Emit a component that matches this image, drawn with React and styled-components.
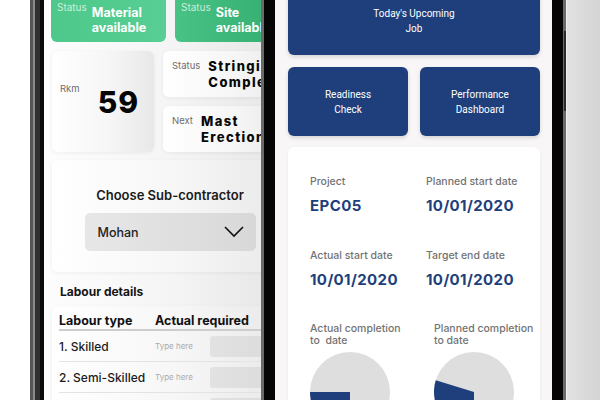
import React from 'react';
import styled, { createGlobalStyle } from 'styled-components';

const GlobalStyle = createGlobalStyle`
  html, body {
    margin: 0;
    height: 400px;
    overflow: hidden;
  }
  body {
    background: linear-gradient(90deg, #fff 0, #fff 566px, #e1e1e1 567px, #d4d4d4 600px);
    font-family: Inter, "Noto Sans", sans-serif;
  }
`;

const Stage = styled.div`
  display: flex;
  align-items: flex-start;
  padding-left: 30px;
  margin-top: -60px;
`;

/* ---------- devices ---------- */

const LeftDevice = styled.div`
  border: 3px solid #555;
  padding: 7px;
  background: #303030;
  box-shadow: inset 0 0 0 2px #8a8a8a;
  border-radius: 44px;
`;

const Bezel = styled.div`
  background: #0a0a0a;
  padding: 4px;
  border-radius: 36px;
`;

const RightDevice = styled.div`
  position: relative;
  z-index: 1;
  margin-left: -49px;
  border: 3px solid #6a6a6a;
  padding: 11px;
  background: #050505;
  border-radius: 44px;
`;

const SideKey = styled.span`
  position: absolute;
  right: -3px;
  top: 88px;
  width: 2px;
  height: 80px;
  background: #2a2a2a;
`;

const LeftScreen = styled.div`
  width: 252px;
  height: 540px;
  box-sizing: border-box;
  padding: 33px 8px 0 7px;
  overflow: hidden;
  background: linear-gradient(90deg, #fdfdfd 0%, #f5f5f5 50%, #e4e4e4 100%);
`;

const RightScreen = styled.div`
  width: 277px;
  height: 530px;
  box-sizing: border-box;
  padding: 33px 12px 0 13px;
  overflow: hidden;
  background: #f8f6f7;
`;

/* ---------- left phone parts ---------- */

const TileRow = styled.div`
  display: grid;
  grid-template-columns: 115px 115px;
  gap: 9px;
`;

const Tile = styled.div`
  height: 55px;
  box-sizing: border-box;
  border-radius: 6px;
  display: flex;
  align-items: flex-end;
  gap: 5px;
  padding: 0 6px 7px;
  background: ${p =>
    p.$deep
      ? 'linear-gradient(90deg, #48c385, #33ab6e)'
      : 'linear-gradient(90deg, #4dc88a, #58ce94)'};
`;

const TileLabel = styled.span`
  align-self: flex-start;
  margin-top: 14px;
  font-size: 10px;
  line-height: 12px;
  color: rgba(255, 255, 255, 0.72);
`;

const TileTitle = styled.span`
  font-size: 12.5px;
  line-height: 15px;
  font-weight: 700;
  color: #fff;
  white-space: nowrap;
`;

const Card = styled.div`
  border-radius: 6px;
  background: linear-gradient(90deg, #fff 0%, #f6f6f6 55%, #e8e8e8 100%);
  box-shadow: 0 1px 4px rgba(0, 0, 0, 0.06);
`;

const MetricRow = styled.div`
  display: grid;
  grid-template-columns: 102px 1fr;
  gap: 9px;
  margin-top: 9px;
  padding-left: 1px;
`;

const RkmCard = styled(Card)`
  height: 101px;
  display: flex;
  align-items: center;
  gap: 18px;
  padding-left: 8px;
`;

const SmallLabel = styled.span`
  font-size: 9.5px;
  line-height: 12px;
  color: #6d6d6d;
`;

const RkmLabel = styled(SmallLabel)`
  margin-bottom: 26px;
`;

const BigNumber = styled.span`
  font-size: 30px;
  line-height: 32px;
  font-weight: 800;
  letter-spacing: 1px;
  color: #050505;
`;

const StepStack = styled.div`
  display: flex;
  flex-direction: column;
  gap: 9px;
`;

const StepCard = styled(Card)`
  height: 46px;
  display: flex;
  align-items: center;
  padding: 0 9px;
`;

const StepBody = styled.div`
  display: flex;
  align-items: flex-start;
  gap: 8px;
`;

const StepLabel = styled(SmallLabel)`
  padding-top: 2px;
`;

const StepTitle = styled.span`
  font-size: 13px;
  line-height: 16px;
  font-weight: 800;
  letter-spacing: 1.4px;
  color: #080808;
  white-space: nowrap;
`;

const ChooseCard = styled(Card)`
  margin: 8px 0 0 1px;
  width: 236px;
  box-sizing: border-box;
  padding: 27px 0 21px;
  display: flex;
  flex-direction: column;
  align-items: center;
`;

const ChooseTitle = styled.div`
  font-size: 13px;
  line-height: 16px;
  font-weight: 600;
  color: #1a1a1a;
`;

const Select = styled.div`
  margin-top: 10px;
  width: 171px;
  height: 38px;
  box-sizing: border-box;
  border-radius: 5px;
  padding: 0 12px 0 13px;
  display: flex;
  align-items: center;
  justify-content: space-between;
  background: linear-gradient(90deg, #e7e7e7, #d8d8d8);
  font-size: 12.5px;
  font-weight: 500;
  color: #222;
`;

const SectionHeading = styled.div`
  margin: 13px 0 7px;
  padding-left: 9px;
  font-size: 12px;
  line-height: 14px;
  font-weight: 700;
  color: #151515;
`;

const TableCard = styled(Card)`
  margin-left: 1px;
  width: 236px;
  padding-left: 7px;
  box-sizing: border-box;
`;

const HeadRow = styled.div`
  display: grid;
  grid-template-columns: 96px 1fr;
  align-items: end;
  height: 25px;
  box-sizing: border-box;
  border-bottom: 2px solid #cdcdcd;
  font-size: 12.5px;
  line-height: 16px;
  font-weight: 700;
  color: #111;
  white-space: nowrap;
`;

const BodyRow = styled.div`
  display: grid;
  grid-template-columns: 96px 55px 1fr;
  align-items: center;
  height: 31px;
  box-sizing: border-box;
  border-bottom: 1px solid #e3e3e3;
`;

const RowLabel = styled.span`
  font-size: 12px;
  font-weight: 500;
  color: #1b1b1b;
  white-space: nowrap;
`;

const Placeholder = styled.span`
  font-size: 8px;
  color: #ababab;
`;

const InputBox = styled.div`
  height: 21px;
  border-radius: 3px;
  background: linear-gradient(90deg, #e2e2e2, #d9d9d9);
`;

/* ---------- right phone parts ---------- */

const ActionButton = styled.div`
  height: ${p => p.$h}px;
  border-radius: 6px;
  background: #1e3f7b;
  box-shadow: 0 2px 4px rgba(0, 0, 0, 0.14);
  display: flex;
  align-items: center;
  justify-content: center;
  text-align: center;
  font-family: Roboto, "Liberation Sans", sans-serif;
  font-size: 10px;
  line-height: 15px;
  color: #fff;
`;

const ButtonRow = styled.div`
  display: grid;
  grid-template-columns: 1fr 1fr;
  gap: 12px;
  margin-top: 12px;
`;

const InfoCard = styled.div`
  margin-top: 11px;
  border-radius: 6px;
  background: #fff;
  box-shadow: 0 1px 4px rgba(0, 0, 0, 0.05);
  padding: 29px 22px 40px;
`;

const FieldGrid = styled.div`
  display: grid;
  grid-template-columns: ${p => p.$first}px 1fr;
  row-gap: 36px;
  margin-top: ${p => p.$top || 0}px;
`;

const FieldLabel = styled.div`
  font-size: 10.5px;
  line-height: 12px;
  font-weight: 500;
  color: #737373;
  white-space: nowrap;
`;

const FieldValue = styled.div`
  margin-top: 9px;
  font-size: 15px;
  line-height: 17px;
  font-weight: 700;
  letter-spacing: 0.4px;
  color: #1e3f7b;
`;

const PieBox = styled.svg`
  display: block;
  margin-top: 5px;
`;

const Chevron = () => (
  <svg width="20" height="12" viewBox="0 0 20 12">
    <polyline points="1,1 10,10 19,1" fill="none" stroke="#111" strokeWidth="1.6" />
  </svg>
);

const Pie = ({ wedge }) => (
  <PieBox width="80" height="80" viewBox="0 0 80 80">
    <circle cx="40" cy="40" r="40" fill="#dedede" />
    <path d={wedge} fill="#1e3f7b" />
  </PieBox>
);

const labourRows = ['1. Skilled', '2. Semi-Skilled', '3. Unskilled'];

const fields = [
  { label: 'Project', value: 'EPC05' },
  { label: 'Planned start date', value: '10/01/2020' },
  { label: 'Actual start date', value: '10/01/2020' },
  { label: 'Target end date', value: '10/01/2020' },
];

const App = () => (
  <>
    <GlobalStyle />
    <Stage>
      <LeftDevice>
        <Bezel>
          <LeftScreen>
            <TileRow>
              <Tile>
                <TileLabel>Status</TileLabel>
                <TileTitle>Material<br />available</TileTitle>
              </Tile>
              <Tile $deep>
                <TileLabel>Status</TileLabel>
                <TileTitle>Site<br />available</TileTitle>
              </Tile>
            </TileRow>

            <MetricRow>
              <RkmCard>
                <RkmLabel>Rkm</RkmLabel>
                <BigNumber>59</BigNumber>
              </RkmCard>
              <StepStack>
                <StepCard>
                  <StepBody>
                    <StepLabel>Status</StepLabel>
                    <StepTitle>Stringing<br />Complete</StepTitle>
                  </StepBody>
                </StepCard>
                <StepCard>
                  <StepBody>
                    <StepLabel>Next</StepLabel>
                    <StepTitle>Mast<br />Erection</StepTitle>
                  </StepBody>
                </StepCard>
              </StepStack>
            </MetricRow>

            <ChooseCard>
              <ChooseTitle>Choose Sub-contractor</ChooseTitle>
              <Select>
                <span>Mohan</span>
                <Chevron />
              </Select>
            </ChooseCard>

            <SectionHeading>Labour details</SectionHeading>
            <TableCard>
              <HeadRow>
                <span>Labour type</span>
                <span>Actual required</span>
              </HeadRow>
              {labourRows.map(row => (
                <BodyRow key={row}>
                  <RowLabel>{row}</RowLabel>
                  <Placeholder>Type here</Placeholder>
                  <InputBox />
                </BodyRow>
              ))}
            </TableCard>
          </LeftScreen>
        </Bezel>
      </LeftDevice>

      <RightDevice>
        <SideKey />
        <RightScreen>
          <ActionButton $h={68}>Today's Upcoming<br />Job</ActionButton>
          <ButtonRow>
            <ActionButton $h={69}>Readiness<br />Check</ActionButton>
            <ActionButton $h={69}>Performance<br />Dashboard</ActionButton>
          </ButtonRow>

          <InfoCard>
            <FieldGrid $first={116}>
              {fields.map(f => (
                <div key={f.label}>
                  <FieldLabel>{f.label}</FieldLabel>
                  <FieldValue>{f.value}</FieldValue>
                </div>
              ))}
            </FieldGrid>
            <FieldGrid $first={124} $top={35}>
              <div>
                <FieldLabel>Actual completion<br />{'to\u00a0 date'}</FieldLabel>
                <Pie wedge="M40,40 L0,40 A40,40 0 0,0 40,80 Z" />
              </div>
              <div>
                <FieldLabel>Planned completion<br />to date</FieldLabel>
                <Pie wedge="M40,40 L1.75,28.3 A40,40 0 0,0 40,80 Z" />
              </div>
            </FieldGrid>
          </InfoCard>
        </RightScreen>
      </RightDevice>
    </Stage>
  </>
);

export default App;
